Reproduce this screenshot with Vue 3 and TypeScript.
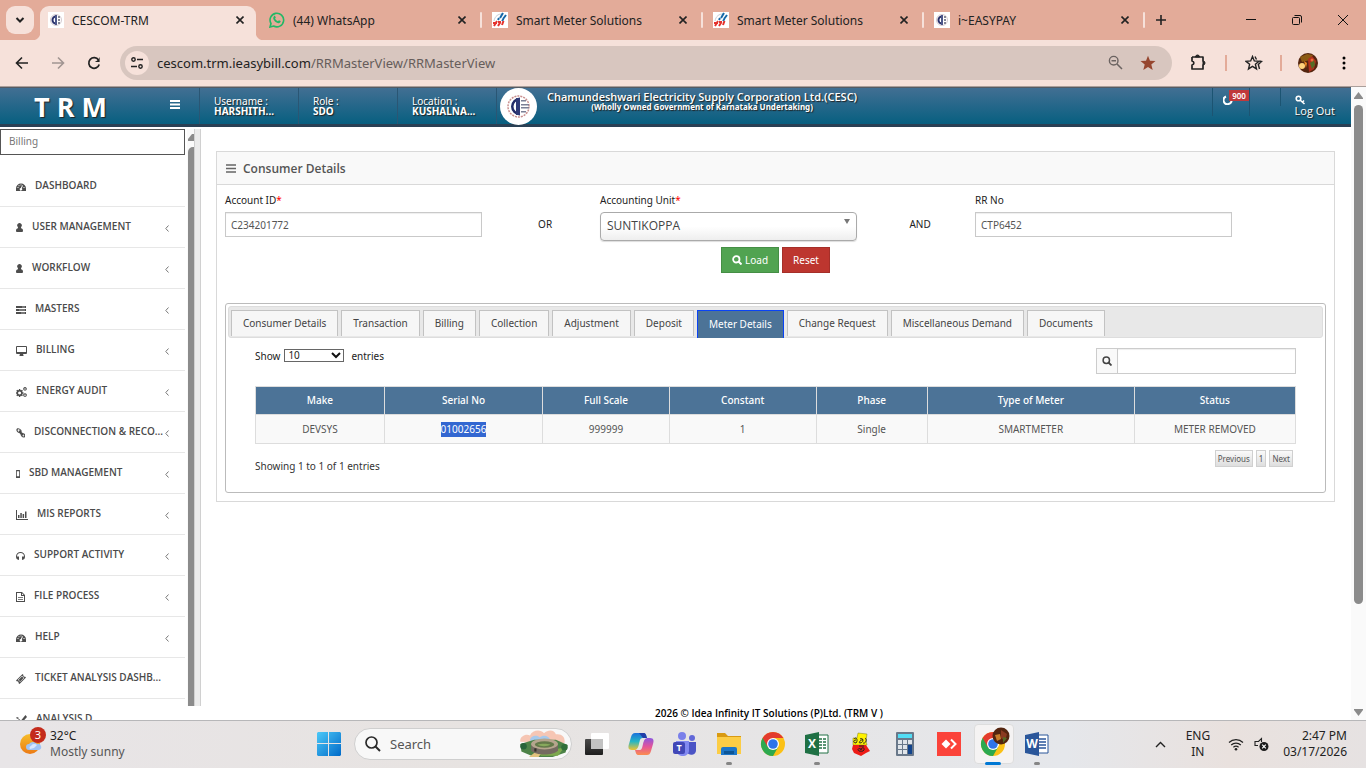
<script setup lang="ts">
import { ref } from 'vue'

interface BrowserTab { title: string; icon: 'cesc' | 'whatsapp' | 'meter' }
interface MenuItem { label: string; icon: string; width: number; leaf?: boolean }
interface Column { label: string; value: string; width: string; selected?: boolean }

const browserTabs: BrowserTab[] = [
  { title: 'CESCOM-TRM', icon: 'cesc' },
  { title: '(44) WhatsApp', icon: 'whatsapp' },
  { title: 'Smart Meter Solutions', icon: 'meter' },
  { title: 'Smart Meter Solutions', icon: 'meter' },
  { title: 'i~EASYPAY', icon: 'cesc' },
]

const gauge = 'M0 9V6.500a5 5 0 0 1 10 0V9ZM4.500 2.500v1h1v-1ZM1.500 5v1h1V5ZM7.500 5v1h1V5ZM2.500 3.200v1h1v-1ZM6.200 3.200 4.800 6a1.300 1.300 0 1 0 1 .3L7 3.600Z'
const person = 'M3.500 0a2.300 2.300 0 0 1 1.600 4L5 5.200c1.300 0 2 1 2 2.500C7 8.600 6.500 9 5.800 9H1.200C.5 9 0 8.600 0 7.700c0-1.500.7-2.500 2-2.500L1.900 4A2.300 2.300 0 0 1 3.500 0Z'

const menu: MenuItem[] = [
  { label: 'DASHBOARD', icon: gauge, width: 10, leaf: true },
  { label: 'USER MANAGEMENT', icon: person, width: 7 },
  { label: 'WORKFLOW', icon: person, width: 7 },
  { label: 'MASTERS', icon: 'M0 1h10v2H0ZM0 4h10v2H0ZM0 7h10v2H0ZM6 1.700v.6h3v-.6ZM3 4.700v.6h6v-.6ZM5 7.700v.6h4v-.6Z', width: 10 },
  { label: 'BILLING', icon: 'M1 0h9a1 1 0 0 1 1 1v6a1 1 0 0 1-1 1H7l.5 1.200V10h-4v-.8L4 8H1a1 1 0 0 1-1-1V1a1 1 0 0 1 1-1ZM1 1v5h9V1Z', width: 11 },
  { label: 'ENERGY AUDIT', icon: 'M3 2h1.200l.2.900.8.400.8-.5.8.800-.5.800.3.800 1 .2v1.200l-1 .2-.3.800.5.800-.8.800-.8-.5-.8.3-.2 1H3l-.2-1-.8-.3-.8.500-.8-.8.500-.8-.3-.8-.6-.2V5.400l.6-.2.3-.8-.5-.8.800-.8.800.5.800-.4ZM3.600 4.500a1.500 1.500 0 1 0 .01 0ZM9 0a1.800 1.800 0 1 1-.01 0ZM9 1.200a.7.700 0 1 0 .01 0ZM9 6.200a1.800 1.800 0 1 1-.01 0ZM9 7.400a.7.700 0 1 0 .01 0Z', width: 11 },
  { label: 'DISCONNECTION & RECO...', icon: 'M1 .6C2.200-.5 4 .5 5 1.800c.8 1 .9 1.600.4 2.200L7 5.200c.800-.2 1.400.2 2 1 1 1.300.3 3.300-1.300 3.300C6 9.500 4.500 8 4.600 6.400L3.300 5C1.500 5-.8 2.200 1 .6ZM1.900 1.500c-.8.800.4 2.200 1.200 2.300L2.700 2.700l.8-.4.8.8c.3-.7-1.600-2.400-2.400-1.600ZM5.700 6.800c.2.900 1.400 2 2.200 1.500.8-.6 0-2-.8-2.100l.4 1-.8.500Z', width: 9 },
  { label: 'SBD MANAGEMENT', icon: 'M.5 1h3a.5.500 0 0 1 .5.500v7a.5.500 0 0 1-.5.500h-3a.5.500 0 0 1-.5-.5v-7A.5.500 0 0 1 .5 1ZM.8 2.200v5h2.400v-5Z', width: 4 },
  { label: 'MIS REPORTS', icon: 'M0 0h1v9h11v1H0ZM2 5h1.500v3H2ZM4.300 3h1.500v5H4.300ZM6.600 4h1.500v4H6.600ZM9 1.500h1.500V8H9Z', width: 12 },
  { label: 'SUPPORT ACTIVITY', icon: 'M4.500 1A4.500 4.500 0 0 1 9 5.500C9 7 8.500 8 7.500 8.500L6 9V5.500h2a3.500 3.500 0 0 0-7 0h2V9l-1.500-.5C.5 8 0 7 0 5.500A4.500 4.500 0 0 1 4.500 1Z', width: 9 },
  { label: 'FILE PROCESS', icon: 'M0 0h6l3 3v7H0ZM1 1v8h7V4H5V1ZM6 1.300V3h1.600ZM2 5h5v.8H2ZM2 7h5v.8H2Z', width: 9 },
  { label: 'HELP', icon: gauge, width: 10 },
  { label: 'TICKET ANALYSIS DASHB...', icon: 'M6.500 0 7.500 1a1 1 0 0 0 1.400 1.400L10 3.500 3.500 10 2.400 9A1 1 0 0 0 1 7.600L0 6.500ZM6 1.700 1.900 5.800 4.200 8.100 8.300 4ZM6 2.400 7.600 4 4.200 7.400 2.600 5.800Z', width: 10, leaf: true },
  { label: 'ANALYSIS D', icon: 'M0 7.500 3 4l2 1.500L9.500 0 11 2 5.500 8 3.500 6.500 1 9.500ZM0 3l1-1 2 1-1 1ZM7 8l1-2 3 3-1 1Z', width: 11, leaf: true },
]

const detailTabs = ['Consumer Details', 'Transaction', 'Billing', 'Collection', 'Adjustment', 'Deposit', 'Meter Details', 'Change Request', 'Miscellaneous Demand', 'Documents']
const activeTab = ref('Meter Details')

const columns: Column[] = [
  { label: 'Make', value: 'DEVSYS', width: '12.4%' },
  { label: 'Serial No', value: '01002656', width: '15.2%', selected: true },
  { label: 'Full Scale', value: '999999', width: '12.2%' },
  { label: 'Constant', value: '1', width: '14.1%' },
  { label: 'Phase', value: 'Single', width: '10.7%' },
  { label: 'Type of Meter', value: 'SMARTMETER', width: '19.9%' },
  { label: 'Status', value: 'METER REMOVED', width: '15.5%' },
]

const menuSearch = ref('')
const accountId = ref('C234201772')
const unit = ref('SUNTIKOPPA')
const rrNo = ref('CTP6452')
const pageSize = ref('10')
const filter = ref('')
const taskApps = ['view', 'copilot', 'teams', 'explorer', 'chrome', 'excel', 'nudi', 'calc', 'anydesk', 'chrome-active', 'word']
const running = ['explorer', 'excel', 'word']
</script>

<template>
  <div class="desktop">
    <header class="tabstrip">
      <button class="tab-search" aria-label="Search tabs">
        <svg width="10" height="10" viewBox="0 0 10 10"><path d="M1.500 3 5 6.500 8.500 3" fill="none" stroke="#222" stroke-width="2" /></svg>
      </button>
      <div v-for="(tab, i) in browserTabs" :key="i" class="btab" :class="{ current: i === 0, second: i === 1, divided: i > 1 }">
        <svg v-if="tab.icon === 'cesc'" class="fav" viewBox="0 0 16 16">
          <path fill="#fff" d="M0 0h16v16H0z" /><circle cx="8" cy="8" r="5.500" fill="none" stroke="#d5cbd0" />
          <path d="M8 3.500a4.500 4.500 0 1 0 0 9v-2a2.500 2.500 0 0 1 0-5Z" fill="#28306b" /><path d="M7 3h2v10H7z" fill="#4d578a" /><path d="M10 4h2v2h-2zM10 7h2v2h-2zM10 10h2v2h-2z" fill="#858796" />
        </svg>
        <svg v-else-if="tab.icon === 'whatsapp'" class="fav" viewBox="0 0 16 16">
          <path d="M1 15 2 11.500A6.800 6.800 0 1 1 4.600 14Z" fill="none" stroke="#22b866" stroke-width="1.600" />
          <path d="M5 4.200c.4-.5 1-.4 1.200 0l.6 1.400-.7 1c.6 1.300 1.600 2.200 2.900 2.700l.9-1 1.700.8c.3 1.200-.9 2.200-2 2.200C6.800 11 4 7.600 4.200 5.700Z" fill="#22b866" />
        </svg>
        <svg v-else class="fav" viewBox="0 0 16 16">
          <path fill="#fff" d="M0 0h16v16H0z" /><path d="M2 9C3 4 6 2 10 2" fill="none" stroke="#c8ced6" />
          <path d="m8 6 3-5M11 7l3-4M6 8l1-2M10 9l1.500-2" stroke="#1769a8" stroke-width="2" />
          <path d="m2 14 3-5M6 14l2.500-4M10 13l1.500-4M1 11h4M6 10h3" stroke="#e5332d" stroke-width="2" />
        </svg>
        <span class="btab-title">{{ tab.title }}</span>
        <button class="tab-close" :aria-label="'Close ' + tab.title">
          <svg width="8" height="8" viewBox="0 0 8 8"><path d="m.5.5 7 7m0-7-7 7" stroke="#222" stroke-width="1.600" /></svg>
        </button>
      </div>
      <button class="new-tab" aria-label="New tab"><svg width="12" height="12" viewBox="0 0 12 12"><path d="M6 1v10M1 6h10" stroke="#222" stroke-width="1.600" /></svg></button>
      <div class="win-buttons">
        <button aria-label="Minimise"><svg width="10" height="10" viewBox="0 0 10 10"><path d="M0 4.500h10" stroke="#111" /></svg></button>
        <button aria-label="Restore"><svg width="10" height="10" viewBox="0 0 10 10"><rect x=".5" y="2.500" width="7" height="7" rx="1" fill="none" stroke="#111" /><path d="M2.500.5H8a1.500 1.500 0 0 1 1.500 1.500v5.500" fill="none" stroke="#111" /></svg></button>
        <button aria-label="Close window"><svg width="10" height="10" viewBox="0 0 10 10"><path d="m0 0 10 10M10 0 0 10" stroke="#111" /></svg></button>
      </div>
    </header>

    <div class="toolbar">
      <button class="nav" aria-label="Back"><svg width="14" height="14" viewBox="0 0 14 14"><path d="M13 7H2m5-5.500L1.500 7 7 12.500" fill="none" stroke="#222" stroke-width="1.600" /></svg></button>
      <button class="nav" aria-label="Forward"><svg width="14" height="14" viewBox="0 0 14 14"><path d="M1 7h11M7 1.500 12.500 7 7 12.500" fill="none" stroke="#a19592" stroke-width="1.600" /></svg></button>
      <button class="nav" aria-label="Reload"><svg width="14" height="14" viewBox="0 0 14 14"><path d="M12.200 8.500A5.300 5.300 0 1 1 11.500 4" fill="none" stroke="#222" stroke-width="1.700" /><path d="M12.600 1v5H7.800l2.400-1.600 1-1Z" fill="#222" /></svg></button>
      <div class="omnibox">
        <button class="site-info" aria-label="Site information"><svg width="14" height="12" viewBox="0 0 14 12"><circle cx="3.500" cy="2.500" r="1.700" fill="none" stroke="#222" stroke-width="1.400" /><circle cx="10.500" cy="9.500" r="1.700" fill="none" stroke="#222" stroke-width="1.400" /><path d="M7 2.500h6M1 9.500h6" stroke="#222" stroke-width="1.500" /></svg></button>
        <a class="url" href="#">cescom.trm.ieasybill.com<span>/RRMasterView/RRMasterView</span></a>
        <svg width="15" height="15" viewBox="0 0 15 15"><circle cx="5.700" cy="5.700" r="4.300" fill="none" stroke="#6b6361" stroke-width="1.400" /><path d="M3.500 5.700H8M9 9l5 5" stroke="#6b6361" stroke-width="1.500" /></svg>
        <svg class="star" width="16" height="16" viewBox="0 0 16 16"><path d="m8 .8 2 5 5.500.3-4.200 3.500 1.400 5.400L8 12l-4.700 3 1.400-5.400L.5 6.100 6 5.800Z" fill="#96462f" /></svg>
      </div>
      <button class="ext" aria-label="Extensions"><svg width="17" height="17" viewBox="0 0 17 17"><path d="M2 3h11v4.500M13 10.500V15H2V11c2.500-.5 2.500-3.500 0-4V3" fill="none" stroke="#222" stroke-width="1.700" stroke-linejoin="round" /><path d="M5.500 3a2 2 0 0 1 4 0ZM13 7a2 2 0 0 1 0 4Z" fill="#222" stroke="#222" /></svg></button>
      <i class="bar-sep"></i>
      <button class="ext" aria-label="Bookmarks"><svg width="18" height="16" viewBox="0 0 18 16"><path d="m7.500 1.500 1.800 4.400 4.700.4-3.600 3 1.100 4.600-4-2.500-4 2.500 1.100-4.600L1 6.300l4.700-.4Z" fill="none" stroke="#222" stroke-width="1.400" /><path d="m10 1.500 1.500 3M14.500 6.300l2 .2-3.200 3 1.200 4.500" fill="none" stroke="#222" stroke-width="1.400" /></svg></button>
      <i class="bar-sep"></i>
      <button class="ext avatar-btn" aria-label="Profile"><svg width="20" height="20" viewBox="0 0 20 20"><circle cx="10" cy="10" r="10" fill="#54250f" /><path d="M2 4 9 1l6 1-3 5-8 2Z" fill="#8c5a12" /><path d="m10 6 4-3 4 5-2 8-5 3Z" fill="#b0301c" /><circle cx="4" cy="13" r="3" fill="#ffd27b" /><path d="m6 8 3 2-1 5Z" fill="#ee8b23" /><path d="m12 10 4-3 1 5-3 4Z" fill="#546c25" /><circle cx="14" cy="7" r="1.500" fill="#ed6b3a" /></svg></button>
      <button class="ext dots" aria-label="Menu"><svg width="4" height="14" viewBox="0 0 4 14"><circle cx="2" cy="2" r="1.500" /><circle cx="2" cy="7" r="1.500" /><circle cx="2" cy="12" r="1.500" /></svg></button>
    </div>

    <div class="viewport">
      <div class="app">
        <header class="app-header">
          <div class="brand">
            <strong>T R M</strong>
            <button aria-label="Toggle menu"><svg width="10" height="9" viewBox="0 0 10 9"><path d="M0 1h10M0 4.500h10M0 8h10" stroke="#fff" stroke-width="2" /></svg></button>
          </div>
          <div class="hcell"><span>Username :</span><b>HARSHITH...</b></div>
          <div class="hcell"><span>Role :</span><b>SDO</b></div>
          <div class="hcell"><span>Location :</span><b>KUSHALNA...</b></div>
          <div class="company">
            <svg width="37" height="37" viewBox="0 0 37 37">
              <circle cx="18.500" cy="18.500" r="18.500" fill="#fff" /><circle cx="18.500" cy="18.500" r="10.500" fill="none" stroke="#c98f8e" stroke-width="1.500" stroke-dasharray="2 1" />
              <path d="M20 9.500a9 9 0 1 0 0 18V25a6 6 0 0 1 0-13Z" fill="#232c68" /><path d="M16 10h4v17h-4z" fill="#2f3a77" /><path d="M21 12h5v1.500h-5zM21 16h8v1.500h-8zM21 19h8v1.500h-8zM21 23h5v1.500h-5z" fill="#7b7f95" />
            </svg>
            <div class="company-name">
              <strong>Chamundeshwari Electricity Supply Corporation Ltd.(CESC)</strong>
              <small>(Wholly Owned Government of Karnataka Undertaking)</small>
            </div>
          </div>
          <button class="alerts" aria-label="Notifications">
            <svg width="10" height="10" viewBox="0 0 10 10"><path d="M3 1.500a4 4 0 1 0 5.500 3" fill="none" stroke="#fff" stroke-width="2" /></svg>
            <span class="badge">900</span>
          </button>
          <span class="spacer-cell"></span>
          <a class="logout" href="#">
            <svg width="11" height="10" viewBox="0 0 11 10"><circle cx="3.500" cy="3.500" r="2.300" fill="none" stroke="#fff" stroke-width="1.600" /><path d="m5 5 4.500 4M7.500 7 9 5.500" stroke="#fff" stroke-width="1.600" /></svg>
            Log Out
          </a>
        </header>

        <div class="body">
          <nav class="sidebar">
            <input v-model="menuSearch" type="text" placeholder="Billing" aria-label="Search menu" />
            <ul>
              <li v-for="item in menu" :key="item.label">
                <a href="#">
                  <svg class="micon" :width="item.width" height="10" :viewBox="`0 0 ${item.width} 10`"><path :d="item.icon" fill="#4d4d4d" fill-rule="evenodd" /></svg>
                  <span class="mlabel">{{ item.label }}</span>
                  <svg v-if="!item.leaf" class="marrow" width="4" height="7" viewBox="0 0 4 7"><path d="M3.500.5.8 3.500l2.700 3" fill="none" stroke="#777" /></svg>
                </a>
              </li>
            </ul>
          </nav>

          <div class="right">
            <div class="work">
              <div class="side-scroll"><svg width="7" height="7" viewBox="0 0 7 7"><path d="M0 7V5l4-5h3v7Z" fill="#8b8b8b" /></svg><i></i></div>
              <div class="gutter"></div>
              <main>
                <section class="panel">
                  <h1><svg width="10" height="9" viewBox="0 0 10 9"><path d="M0 1h10M0 4.500h10M0 8h10" stroke="#666" stroke-width="1.600" /></svg>Consumer Details</h1>
                  <form class="criteria" @submit.prevent>
                    <div class="row">
                      <div class="field"><label for="acc">Account ID<em>*</em></label><input id="acc" v-model="accountId" type="text" /></div>
                      <div class="joiner">OR</div>
                      <div class="field">
                        <label for="unit">Accounting Unit<em>*</em></label>
                        <div class="pick unit">
                          <select id="unit" v-model="unit"><option>SUNTIKOPPA</option></select>
                          <svg width="6" height="5" viewBox="0 0 6 5"><path d="M0 0h6L3 5Z" fill="#777" /></svg>
                        </div>
                      </div>
                      <div class="joiner">AND</div>
                      <div class="field"><label for="rr">RR No</label><input id="rr" v-model="rrNo" type="text" /></div>
                    </div>
                    <div class="actions">
                      <button class="load" type="submit"><svg width="10" height="10" viewBox="0 0 10 10"><circle cx="4.300" cy="4.300" r="3.200" fill="none" stroke="#fff" stroke-width="1.800" /><path d="m6.500 6.500 3 3" stroke="#fff" stroke-width="2" /></svg>Load</button>
                      <button class="reset" type="button">Reset</button>
                    </div>
                  </form>

                  <div class="details">
                    <div class="dtabs">
                      <button v-for="t in detailTabs" :key="t" type="button" :class="{ active: t === activeTab }" @click="activeTab = t">{{ t }}</button>
                    </div>
                    <div class="grid">
                      <div class="grid-tools">
                        <div class="length">
                          <label for="len">Show</label>
                          <div class="pick size">
                            <select id="len" v-model="pageSize"><option>10</option><option>25</option><option>50</option></select>
                            <svg width="10" height="7" viewBox="0 0 10 7"><path d="m1 1 4 4 4-4" fill="none" stroke="#111" stroke-width="2" /></svg>
                          </div>
                          <span>entries</span>
                        </div>
                        <div class="filter">
                          <label for="filter" aria-label="Filter rows"><svg width="10" height="10" viewBox="0 0 10 10"><circle cx="4.300" cy="4.300" r="3.200" fill="none" stroke="#444" stroke-width="1.500" /><path d="m6.500 6.500 3 3" stroke="#444" stroke-width="1.800" /></svg></label>
                          <input id="filter" v-model="filter" type="text" />
                        </div>
                      </div>
                      <table>
                        <colgroup><col v-for="c in columns" :key="c.label" :style="{ width: c.width }" /></colgroup>
                        <thead><tr><th v-for="c in columns" :key="c.label">{{ c.label }}</th></tr></thead>
                        <tbody><tr><td v-for="c in columns" :key="c.label"><span :class="{ selected: c.selected }">{{ c.value }}</span></td></tr></tbody>
                      </table>
                      <div class="grid-foot">
                        <span>Showing 1 to 1 of 1 entries</span>
                        <div class="pager"><button type="button">Previous</button><button type="button">1</button><button type="button">Next</button></div>
                      </div>
                    </div>
                  </div>
                </section>
              </main>
            </div>
            <footer>2026 © Idea Infinity IT Solutions (P)Ltd. (TRM V )</footer>
          </div>
        </div>
      </div>
      <div class="page-scroll">
        <svg width="9" height="7" viewBox="0 0 9 7"><path d="M4.500 0 9 6v1H0V6Z" fill="#8b8b8b" /></svg>
        <i></i>
        <svg width="9" height="7" viewBox="0 0 9 7"><path d="M4.500 7 9 1V0H0v1Z" fill="#8b8b8b" /></svg>
      </div>
    </div>

    <footer class="taskbar">
      <div class="weather">
        <div class="weather-icon">
          <svg width="24" height="28" viewBox="0 0 24 28"><defs><linearGradient id="sun" x2="0" y2="1"><stop stop-color="#f6bd2a" /><stop offset="1" stop-color="#ec7a15" /></linearGradient></defs><circle cx="10" cy="17" r="10" fill="url(#sun)" /><path d="M9 23a3 3 0 0 1 0-6 5 5 0 0 1 8 0 3 3 0 0 1 2 6Z" fill="#9fc4f6" /><path d="M10 22a2 2 0 0 1 1-3 4 4 0 0 1 6-1l-3 3Z" fill="#d8e8ff" /></svg>
          <span>3</span>
        </div>
        <div class="weather-text"><b>32°C</b><span>Mostly sunny</span></div>
      </div>
      <div class="apps">
        <button class="app-btn" aria-label="Start"><svg width="24" height="24" viewBox="0 0 24 24"><defs><linearGradient id="win" x2="1" y2="1"><stop stop-color="#4cc9f8" /><stop offset="1" stop-color="#0069c8" /></linearGradient></defs><path d="M1 0h10v11H0V1ZM12 0h11l1 1v10H12ZM0 12h11v12H1l-1-1ZM12 12h12v11l-1 1H12Z" fill="url(#win)" /></svg></button>
        <label class="search">
          <svg width="16" height="16" viewBox="0 0 16 16"><circle cx="6.500" cy="6.500" r="5.500" fill="none" stroke="#2a2a2a" stroke-width="1.700" /><path d="m10.500 10.500 4.500 4.500" stroke="#2a2a2a" stroke-width="2" /></svg>
          <input type="search" placeholder="Search" aria-label="Search Windows" />
          <svg class="scene" width="46" height="26" viewBox="0 0 46 26">
            <path d="M1 11C0 6 6 3 10 5c2-5 10-6 13-2 4-4 10-3 11 1 6-1 9 3 8 8Z" fill="#f6c6b4" /><path d="M10 10c0-5 7-6 9-3 3-3 9-2 10 3Z" fill="#a6c9ec" /><path d="M1 13 14 9h20l11 5-2 7-12 4H14L2 20Z" fill="#4d8348" /><path d="M18 18h15l9-2-6 8H20Z" fill="#7da94e" /><path d="m9 25 8-6 4 2-3 4Z" fill="#e1c37d" />
            <path d="M11 13v6c4 5 21 5 25 0v-6Z" fill="#746b60" /><ellipse cx="23.500" cy="13" rx="12.500" ry="5" fill="#b5a58d" /><ellipse cx="23.500" cy="13.500" rx="9" ry="3" fill="#64794a" /><path d="M17 13.500c3-1 9-1 12 0-3 2-9 2-12 0Z" fill="#87a95c" /><path d="M14 17h2v3h-2z" fill="#352f2b" /><circle cx="4" cy="15" r="3" fill="#28643a" /><circle cx="42" cy="16" r="3" fill="#316f3a" />
          </svg>
        </label>
        <button v-for="a in taskApps" :key="a" class="app-btn" :class="{ focused: a === 'chrome-active', running: running.includes(a) }" :aria-label="a">
          <svg v-if="a === 'view'" width="24" height="24" viewBox="0 0 24 24"><defs><linearGradient id="tv" x2="0" y2="1"><stop stop-color="#4a4a4a" /><stop offset="1" stop-color="#1e1e1e" /></linearGradient></defs><rect y="7" width="18" height="16" rx="1" fill="url(#tv)" /><rect x="6" y="1" width="18" height="16" rx="1" fill="#fff" /><path d="M6 7h12v10H6z" fill="#c2c2c2" /></svg>
          <svg v-else-if="a === 'copilot'" width="26" height="24" viewBox="0 0 26 24"><defs><linearGradient id="cp1" x2="0" y2="1"><stop stop-color="#1c72dc" /><stop offset=".5" stop-color="#26b6c4" /><stop offset="1" stop-color="#f1c32f" /></linearGradient><linearGradient id="cp2" x2="0" y2="1"><stop stop-color="#8b56e0" /><stop offset=".5" stop-color="#e3549a" /><stop offset="1" stop-color="#fb8d4e" /></linearGradient></defs><path d="M7 1h8c3 0 3 2 4 5h-4c-3 0-3 2-4 6s-2 6-5 6H4c-4 0-4-3-3-6l2-7c1-3 2-4 4-4Z" fill="url(#cp1)" /><path d="M19 23h-8c-3 0-3-2-4-5h4c3 0 3-2 4-6s2-6 5-6h2c4 0 4 3 3 6l-2 7c-1 3-2 4-4 4Z" fill="url(#cp2)" /><path d="M11 1h4c3 0 3 2 4 5h-4Z" fill="#213ea8" /></svg>
          <svg v-else-if="a === 'teams'" width="24" height="24" viewBox="0 0 24 24"><circle cx="9" cy="4" r="4" fill="#7a80ea" /><circle cx="19" cy="6" r="3" fill="#6268d8" /><path d="M14 10h9v8c0 6-8 6-9 2Z" fill="#4b54c5" /><path d="M3 9h13v9c0 8-12 8-13 0Z" fill="#8289f0" /><rect y="10" width="12" height="12" rx="2" fill="#4147b7" /><text x="6" y="19" text-anchor="middle" class="glyph small">T</text></svg>
          <svg v-else-if="a === 'explorer'" width="26" height="24" viewBox="0 0 26 24"><path d="M1 1h8l3 3h13v8H1Z" fill="#d99a12" /><path d="M1 5h24v17H1Z" fill="#fccd45" /><path d="M5 17a2 2 0 0 1 2-2h12a2 2 0 0 1 2 2v6H5Z" fill="#1d76c7" /><path d="M8 19h10v3H8z" fill="#0d5596" /></svg>
          <svg v-else-if="a === 'chrome' || a === 'chrome-active'" width="26" height="26" viewBox="0 0 26 26">
            <circle cx="13" cy="13" r="12" fill="#fbc116" /><path d="M13 13 2.600 7A12 12 0 0 0 13 25l5.200-9Z" fill="#2da94f" /><path d="M2.600 7A12 12 0 0 1 23.400 7H13l-5.200 9Z" fill="#e33b2e" /><circle cx="13" cy="13" r="6" fill="#fff" /><circle cx="13" cy="13" r="4.800" fill="#2f74e9" />
            <g v-if="a === 'chrome-active'"><circle cx="21" cy="5" r="8.500" fill="#54250f" /><path d="m21-1 6 4-2 7-4-3Z" fill="#8a3a20" /><path d="m15 4 5-1 1 5-4 2Z" fill="#c77c2a" /><path d="m23 6 4 1-4 5Z" fill="#546c25" /></g>
          </svg>
          <svg v-else-if="a === 'excel'" width="24" height="24" viewBox="0 0 24 24"><path d="M12 3h11v18H12Z" fill="#fff" stroke="#237346" /><path d="M14 7h3M18 7h3M14 10h3M18 10h3M14 13h3M18 13h3M14 16h3M18 16h3" stroke="#237346" stroke-width="1.500" /><path d="m0 3 14-3v24L0 21Z" fill="#1f7044" /><text x="7" y="16" text-anchor="middle" class="glyph">X</text></svg>
          <svg v-else-if="a === 'nudi'" width="20" height="24" viewBox="0 0 20 24"><path d="M7 1 16 2l-1 7 1 4H2V6h4Z" fill="#fff200" stroke="#7d7a22" stroke-width=".5" /><path d="M2 13h13l4 6-4 2-5 3-7-3-2-4Z" fill="#ed1b16" /><path d="M3 7c3-3 4 2 2 4-3 0-3-3 0-3m4-1c4-2 4 4 0 4-2 0 1-4 3-3m2-2c3 2 0 6-2 5M8 14h5m-5 5c-3-2 2-4 2-1 0-3 4-3 3 0-1 2-4 1-5 1Z" fill="none" stroke="#222" /></svg>
          <svg v-else-if="a === 'calc'" width="18" height="24" viewBox="0 0 18 24"><rect width="18" height="24" rx="1" fill="#69788a" /><path d="M2 2h14v4H2z" fill="#52ddf5" /><path d="M2 8h4v4H2zM7 8h4v4H7zM12 8h4v4h-4zM2 13h4v4H2zM7 13h4v4H7zM2 18h4v4H2zM7 18h4v4H7z" fill="#e0e5ea" /><path d="M12 13h4v9h-4z" fill="#12448c" /></svg>
          <svg v-else-if="a === 'anydesk'" width="24" height="24" viewBox="0 0 24 24"><path fill="#fb433a" d="M0 0h24v24H0z" /><path d="m9 7.500 4.500 4.500L9 16.500 4.500 12Z" fill="#fff" /><path d="m14 7.500 4.500 4.500-4.500 4.500" fill="none" stroke="#fff" stroke-width="2" /></svg>
          <svg v-else width="24" height="24" viewBox="0 0 24 24"><path d="M12 3h11v18H12Z" fill="#fff" stroke="#2a569a" /><path d="M14 7h7M14 10h7M14 13h7M14 16h7" stroke="#2a569a" stroke-width="1.500" /><path d="m0 3 14-3v24L0 21Z" fill="#2a569a" /><text x="7" y="16" text-anchor="middle" class="glyph">W</text></svg>
        </button>
      </div>
      <div class="tray">
        <button aria-label="Hidden icons"><svg width="11" height="7" viewBox="0 0 11 7"><path d="m1 6 4.500-4.500L10 6" fill="none" stroke="#222" stroke-width="1.400" /></svg></button>
        <div class="lang"><span>ENG</span><span>IN</span></div>
        <svg width="16" height="13" viewBox="0 0 16 13"><path d="M1 4.500a10 10 0 0 1 14 0M3.200 7a7 7 0 0 1 9.600 0M5.400 9.300a4 4 0 0 1 5.200 0" fill="none" stroke="#222" stroke-width="1.200" /><circle cx="8" cy="11.300" r="1.300" fill="#222" /></svg>
        <svg class="sound" width="15" height="15" viewBox="0 0 15 15"><path d="M7.500 5V1.500L4.500 4.500H1v4h3" fill="none" stroke="#222" stroke-width="1.100" /><circle cx="10" cy="9.500" r="4.500" fill="#1c1c1c" /><path d="m8.200 7.700 3.600 3.600m0-3.600-3.600 3.600" stroke="#fff" stroke-width="1.200" /></svg>
        <div class="clock"><span>2:47 PM</span><span>03/17/2026</span></div>
      </div>
    </footer>
  </div>
</template>

<style>
body { margin: 0; overflow: hidden; }
</style>

<style scoped>
* { box-sizing: border-box; }
.desktop { display: flex; flex-direction: column; height: 100vh; overflow: hidden; background: #fff; font-family: "Noto Sans", "Open Sans", sans-serif; font-size: 10px; color: #222; }
button { border: 0; padding: 0; background: none; font: inherit; color: inherit; display: flex; align-items: center; justify-content: center; }
a { color: inherit; text-decoration: none; }
svg { display: block; flex: none; }
input, select { font: inherit; outline: 0; border-radius: 0; }

/* browser frame */
.tabstrip { display: flex; align-items: flex-start; flex: none; height: 40px; padding: 6px 0 0 6px; background: #e3ab99; font-size: 12px; }
.tab-search { width: 28px; height: 28px; margin-right: 6px; border-radius: 9px; background: #f6e1da; flex: none; }
.btab { position: relative; display: flex; align-items: center; flex: 0 1 221px; min-width: 0; height: 34px; padding-bottom: 6px; }
.btab.current { flex-basis: 216px; margin-right: 5px; padding: 0 12px 6px 8px; border-radius: 9px 9px 0 0; background: #f6e1da; }
.btab.current::before, .btab.current::after { content: ""; position: absolute; bottom: 0; width: 8px; height: 8px; }
.btab.current::before { right: 100%; background: radial-gradient(circle at 0 0, transparent 8px, #f6e1da 9px); }
.btab.current::after { left: 100%; background: radial-gradient(circle at 100% 0, transparent 8px, #f6e1da 9px); }
.btab.second { flex-basis: 219px; padding: 0 14px 0 8px; height: 28px; }
.btab.divided { height: 28px; padding: 0 14px 0 10px; }
.btab.divided::before, .new-tab::before { content: ""; width: 2px; height: 16px; background: #f6e1da; border-radius: 1px; margin-left: -10px; margin-right: 10px; }
.fav { width: 16px; height: 16px; margin-right: 8px; }
.btab-title { flex: 1; white-space: nowrap; overflow: hidden; }
.tab-close { width: 8px; height: 16px; }
.new-tab { width: 24px; height: 28px; padding-left: 10px; }
.new-tab::before { flex: none; }
.win-buttons { display: flex; margin-left: auto; }
.win-buttons button { width: 46px; height: 28px; }
.toolbar { display: flex; align-items: center; flex: none; height: 47px; padding: 0 12px 1px 4px; background: #f6e1da; border-bottom: 1px solid #aa9f9b; }
.nav { width: 36px; height: 34px; }
.omnibox { flex: 1; min-width: 0; display: flex; align-items: center; height: 34px; margin-left: 8px; padding: 0 16px 0 5px; border-radius: 17px; background: #d8c6bf; }
.site-info { width: 24px; height: 24px; border-radius: 12px; background: #f6e1da; }
.url { flex: 1; margin-left: 8px; font-size: 13px; white-space: nowrap; overflow: hidden; }
.url span { color: #665d5b; }
.star { margin-left: 17px; }
.ext { width: 37px; height: 34px; margin-left: 8px; }
.bar-sep { width: 2px; height: 16px; background: #e3ab99; margin-left: 8px; }
.avatar-btn { width: 36px; }
.dots { width: 20px; }

/* application */
.viewport { display: flex; flex: 1; min-height: 0; }
.app { flex: 1; min-width: 0; display: flex; flex-direction: column; }
.app-header { display: flex; align-items: stretch; flex: none; height: 40px; background: linear-gradient(#426f93, #075f80); border-top: 1px solid #555b63; border-bottom: 3px solid #2a4054; color: #fff; text-shadow: 1px 1px 1px #222; }
.brand { display: flex; align-items: flex-start; justify-content: space-between; width: 199px; padding: 0 19px 0 34px; }
.brand strong { font: 700 27px/37px "Open Sans", sans-serif; white-space: nowrap; }
.brand button { padding-top: 12px; }
.hcell { display: flex; flex-direction: column; width: 99px; padding: 8px 0 0 14px; border-left: 1px solid #2a5674; line-height: 10px; }
.company { display: flex; flex: 1; min-width: 0; border-left: 1px solid #2a5674; padding-left: 3px; }
.company-name { display: flex; flex-direction: column; align-items: center; margin-left: 10px; padding-top: 4px; line-height: 10px; white-space: nowrap; }
.company-name strong { font-family: "Open Sans", sans-serif; font-size: 11px; font-weight: 600; }
.company-name small { font-size: 8px; font-weight: 700; line-height: 9px; }
.alerts { align-items: flex-start; width: 38px; height: 28px; padding: 2px 0 0 5px; border-left: 1px solid #1c5472; border-right: 1px solid #1c5472; text-shadow: none; }
.alerts svg { margin-top: 5px; }
.badge { margin-left: -4px; margin-right: -6px; padding: 0 3px; background: #c0393b; font-size: 8px; font-weight: 600; line-height: 11px; }
.spacer-cell { width: 31px; height: 18px; border-right: 1px solid #1c5472; }
.logout { display: flex; flex-direction: column; padding: 7px 16px 0 14px; font: 11px/12px "Open Sans", sans-serif; white-space: nowrap; }
.body { display: flex; flex: 1; min-height: 0; padding-top: 2px; }
.sidebar { width: 187px; flex: none; overflow: hidden; padding-right: 2px; }
.sidebar input { display: block; width: 100%; height: 26px; padding: 0 8px 2px; border: 1px solid #555; background: #fff; }
.sidebar input::placeholder { color: #777; opacity: 1; }
.sidebar ul { margin: 11px 0 0; padding: 0; list-style: none; }
.sidebar li { border-bottom: 1px solid #e7e7e7; }
.sidebar a { display: flex; align-items: center; height: 40px; padding: 0 16px 1px; }
.micon { margin: 3px 9px 0 0; }
.mlabel { flex: 1; min-width: 0; font: 600 10px/15px "Open Sans", sans-serif; color: #4a4a4a; white-space: nowrap; }
.marrow { margin: 3px 0 0 -1px; }
.right { flex: 1; min-width: 0; display: flex; flex-direction: column; }
.work { flex: 1; min-height: 0; display: flex; }
.side-scroll { width: 7px; display: flex; flex-direction: column; padding: 5px 0 0 1px; overflow: hidden; background: #fafafa; }
.side-scroll i { flex: 1; margin-top: 6px; background: #8b8b8b; border-radius: 5px 0 0 0; }
.gutter { width: 7px; background: #ebebeb; border: 0 solid #d0d0d0; border-width: 0 1px; }
main { flex: 1; min-width: 0; padding: 22px 16px 0 15px; }
.right > footer { flex: none; height: 14px; text-align: center; line-height: 14px; font-family: "Open Sans", sans-serif; font-weight: 600; color: #000; }
.panel { border: 1px solid #d9d9d9; padding-bottom: 8px; }
.panel h1 { display: flex; align-items: center; gap: 7px; height: 33px; margin: 0; padding: 0 9px; font: 600 12px "Open Sans", sans-serif; color: #555; background: #f9f9f9; border-bottom: 1px solid #d9d9d9; }
.criteria { padding: 6px 8px 30px; }
.row { display: grid; grid-template-columns: 3fr 1fr 3fr 1fr 3fr 1fr; margin: 0 -12px; }
.field { padding: 0 12px; }
.field label { display: block; line-height: 18px; margin-bottom: 3px; }
.field em { color: #f00; font-style: normal; }
.field input { display: block; width: 100%; height: 25px; padding: 1px 5px; border: 1px solid #c9c9c9; color: #555; box-shadow: inset 0 1px 1px #eee; }
.joiner { padding-top: 24px; padding-left: 8px; line-height: 18px; text-align: center; }
.pick { display: grid; align-items: center; }
.pick > * { grid-area: 1 / 1; }
.pick select { width: 100%; appearance: none; }
.pick svg { justify-self: end; pointer-events: none; }
.unit select { height: 29px; padding: 0 6px 2px; font: 12px "Open Sans", sans-serif; color: #444; border: 1px solid #aaa; border-radius: 4px; background: linear-gradient(#fff 50%, #eee); box-shadow: 0 1px 1px #ddd; }
.unit svg { margin: 0 7px 10px 0; }
.actions { display: flex; justify-content: center; gap: 3px; margin-top: 6px; }
.actions button { height: 26px; padding: 0 10px; color: #fff; gap: 3px; }
.load { background: #51a351; border: 1px solid #458e45; }
.reset { background: #bd362f; border: 1px solid #a52f29; }
.details { margin: 0 8px; border: 1px solid #bbb; border-radius: 3px; padding: 2px; }
.dtabs { display: flex; align-items: flex-start; gap: 3px; height: 32px; padding: 3px 2px 0; background: #e8e8e8; border: 1px solid #ddd; border-radius: 3px; }
.dtabs button { height: 26px; padding: 0 11px 2px; border: 1px solid #c2c2c2; border-bottom: 0; background: #f6f6f6; color: #444; white-space: nowrap; }
.dtabs button.active { height: 28px; background: #4c7397; border-color: #0a43f5; color: #fff; }
.grid { padding: 10px 27px 15px; }
.grid-tools { display: flex; justify-content: space-between; align-items: flex-start; margin-bottom: 12px; }
.length { display: flex; align-items: center; gap: 4px; height: 15px; }
.length span { margin-left: 3px; }
.size { width: 60px; }
.size select { height: 13px; padding: 0 3px; line-height: 11px; border: 1px solid #666; background: #fff; color: #222; }
.size svg { margin-right: 3px; }
.filter { display: flex; width: 200px; height: 26px; border: 1px solid #ccc; }
.filter label { display: flex; align-items: center; justify-content: center; width: 21px; background: #f9f9f9; border-right: 1px solid #ccc; }
.filter input { flex: 1; min-width: 0; border: 0; box-shadow: inset 0 1px 1px #eee; }
table { width: 100%; table-layout: fixed; border-collapse: collapse; }
th, td { padding: 0; border: 1px solid #ddd; text-align: center; font-weight: 400; }
th { height: 28px; padding-bottom: 2px; background: #4c7397; color: #fff; font-weight: 500; }
td { height: 29px; background: #f9f9f9; color: #555; }
.selected { display: inline-block; background: #3367d1; color: #fff; line-height: 15px; }
.grid-foot { display: flex; justify-content: space-between; align-items: flex-start; padding: 6px 3px 0 0; }
.grid-foot > span { line-height: 14px; padding-top: 9px; padding-bottom: 2px; color: #333; }
.pager { display: flex; gap: 3px; }
.pager button { height: 17px; padding: 0 2px; font-size: 8px; color: #555; border: 1px solid #d0d0d0; background: linear-gradient(#fafafa, #dedede); }
.page-scroll { width: 15px; flex: none; display: flex; flex-direction: column; align-items: center; padding: 5px 0 4px; background: #fafafa; }
.page-scroll i { width: 9px; flex: 0 1 80%; margin: 6px 0 auto; background: #8b8b8b; border-radius: 5px; }

/* taskbar */
.taskbar { display: grid; grid-template-columns: 1fr auto 1fr; align-items: center; flex: none; height: 48px; padding-bottom: 1px; border-top: 1px solid #b7b7b9; background: linear-gradient(90deg, #e8e5e7, #e7e3e1 35%, #e5e7eb 78%, #e9e1de 90%, #e6e2e2); font-size: 12px; line-height: 16px; color: #222; }
.weather { display: flex; align-items: center; padding-left: 20px; }
.weather-icon { position: relative; width: 24px; height: 28px; margin-right: 6px; margin-top: -6px; }
.weather-icon span { position: absolute; left: 10px; top: 0; width: 16px; height: 16px; border-radius: 8px; background: #c42b1c; color: #fff; font-size: 11px; text-align: center; }
.weather-text { display: flex; flex-direction: column; }
.weather-text b { font-weight: 400; }
.weather-text span { color: #555; }
.apps { display: flex; align-items: center; }
.app-btn { position: relative; width: 44px; height: 46px; }
.running::after, .focused::after { content: ""; position: absolute; bottom: 2px; width: 6px; height: 3px; border-radius: 2px; background: #858585; }
.focused::after { width: 16px; background: #0078d4; }
.focused::before { content: ""; position: absolute; left: 3px; top: 3px; width: 38px; height: 38px; border-radius: 4px; background: #f5f3f3; border: 1px solid #ddd; }
.focused svg { position: relative; overflow: visible; }
.glyph { font: bold 12px "Open Sans", sans-serif; fill: #fff; }
.glyph.small { font-size: 9px; }
.search { display: flex; align-items: center; width: 218px; height: 32px; margin: 0 3px 0 3px; padding: 0 2px 0 10px; border: 1px solid #cfcfcf; border-radius: 16px; background: #f8f8f8; }
.search input { flex: 1; min-width: 0; padding: 0; margin-left: 9px; border: 0; background: none; font-size: 13px; }
.search input::placeholder { color: #555; opacity: 1; }
.search .scene { width: 50px; height: 28px; }
.tray { display: flex; align-items: center; justify-content: flex-end; padding-right: 19px; white-space: nowrap; }
.lang, .clock { display: flex; flex-direction: column; align-items: center; }
.lang { margin: 0 18px 0 20px; }
.sound { margin: 0 14px 0 10px; }
.clock { align-items: flex-end; }
</style>
